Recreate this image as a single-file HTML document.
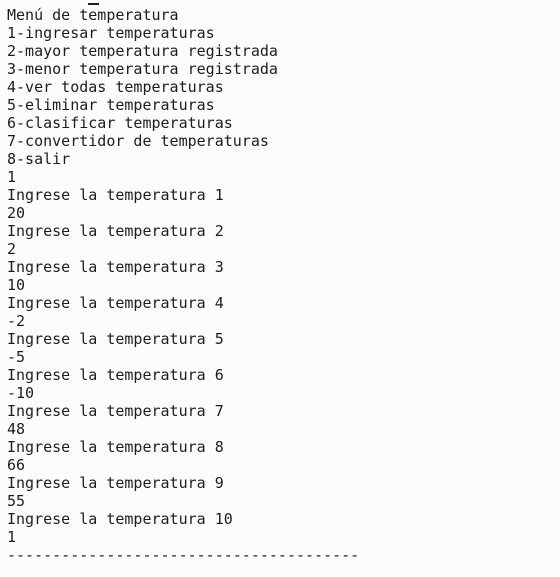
<!DOCTYPE html>
<html><head><meta charset="utf-8"><style>
html,body{margin:0;padding:0;background:#fcfcfc;width:560px;height:577px;overflow:hidden}
pre{margin:0;position:absolute;left:7px;top:6px;font-family:"DejaVu Sans Mono","Liberation Mono",monospace;font-size:15px;line-height:18px;color:#1c1c24}
.m{position:absolute;left:88px;top:3px;width:11px;height:2px;background:#1c1c24}
</style></head><body>
<div class="m"></div>
<pre>Menú de temperatura
1-ingresar temperaturas
2-mayor temperatura registrada
3-menor temperatura registrada
4-ver todas temperaturas
5-eliminar temperaturas
6-clasificar temperaturas
7-convertidor de temperaturas
8-salir
1
Ingrese la temperatura 1
20
Ingrese la temperatura 2
2
Ingrese la temperatura 3
10
Ingrese la temperatura 4
-2
Ingrese la temperatura 5
-5
Ingrese la temperatura 6
-10
Ingrese la temperatura 7
48
Ingrese la temperatura 8
66
Ingrese la temperatura 9
55
Ingrese la temperatura 10
1
---------------------------------------</pre>
</body></html>
